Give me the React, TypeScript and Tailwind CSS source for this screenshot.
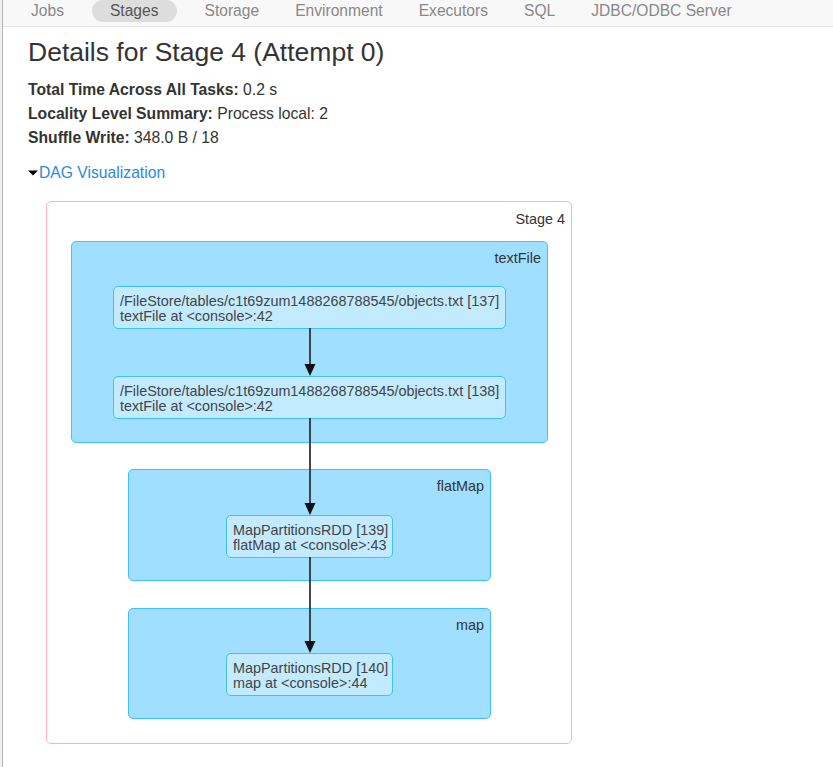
import React from 'react';

const tabs = ['Jobs', 'Stages', 'Storage', 'Environment', 'Executors', 'SQL', 'JDBC/ODBC Server'];

const stats = [
  { label: 'Total Time Across All Tasks:', value: '0.2 s' },
  { label: 'Locality Level Summary:', value: 'Process local: 2' },
  { label: 'Shuffle Write:', value: '348.0 B / 18' },
];

// DAG layout, coordinates relative to the stage box
const clusters = [
  { name: 'textFile', left: 24, top: 39, width: 477, height: 202 },
  { name: 'flatMap', left: 81, top: 267, width: 363, height: 112 },
  { name: 'map', left: 81, top: 406, width: 363, height: 111 },
];

const nodes = [
  { left: 66, top: 84, width: 393, lines: ['/FileStore/tables/c1t69zum1488268788545/objects.txt [137]', 'textFile at <console>:42'] },
  { left: 66, top: 174, width: 393, lines: ['/FileStore/tables/c1t69zum1488268788545/objects.txt [138]', 'textFile at <console>:42'] },
  { left: 179, top: 313, width: 167, lines: ['MapPartitionsRDD [139]', 'flatMap at <console>:43'] },
  { left: 179, top: 451, width: 167, lines: ['MapPartitionsRDD [140]', 'map at <console>:44'] },
];

const edges = [
  { x: 263, y1: 126, y2: 174 },
  { x: 263, y1: 216, y2: 313 },
  { x: 263, y1: 355, y2: 451 },
];

const App = () => {
  return (
    <div className="min-h-screen bg-white flex text-[#333]" style={{ fontFamily: '"Liberation Sans", Arial, sans-serif' }}>
      {/* left window edge */}
      <div className="w-[3px] bg-[#f0f0f0] border-r border-[#b5b5b5] shrink-0" />

      <div className="flex-1 flex flex-col">
        {/* Nav */}
        <div className="h-[27px] bg-[#f8f8f8] border-b border-[#e3e3e3] flex items-start pl-[10px] text-[15.6px] leading-[22px] text-[#888]">
          {tabs.map((t) =>
            t === 'Stages' ? (
              <div key={t} className="mx-[10px] px-[18px] bg-[#dddddd] rounded-full text-[#555] h-[22px]">
                {t}
              </div>
            ) : (
              <div key={t} className="px-[18px]">
                {t}
              </div>
            )
          )}
        </div>

        <div className="pl-[25px] pt-[10px]">
          <h3 className="text-[26.5px] leading-[30px] text-[#333]">Details for Stage 4 (Attempt 0)</h3>

          <ul className="mt-[11px] text-[15.7px] leading-[24px]">
            {stats.map((s) => (
              <li key={s.label}>
                <strong className="font-bold">{s.label}</strong> {s.value}
              </li>
            ))}
          </ul>

          <div className="mt-[11px] flex items-center text-[15.7px] leading-[24px] text-[#2a8ad9]">
            <svg width="11" height="8" viewBox="0 0 11 8">
              <path d="M0 1.5 L10 1.5 L5 6.5 Z" fill="#000" />
            </svg>
            <span>DAG Visualization</span>
          </div>

          {/* DAG */}
          <div className="relative mt-[16px] ml-[18px] w-[526px] h-[543px] bg-white border border-[#ffb0c0] rounded-[5px] text-[14.4px] leading-[15px] text-[#333]">
            <div className="absolute right-[6px] top-[10px]">Stage 4</div>

            {clusters.map((c) => (
              <div
                key={c.name}
                className="absolute bg-[#a0dfff] border border-[#3ec0ff] rounded-[5px]"
                style={{ left: c.left, top: c.top, width: c.width, height: c.height }}
              >
                <div className="absolute right-[6px] top-[9px]">{c.name}</div>
              </div>
            ))}

            {nodes.map((n, i) => (
              <div
                key={i}
                className="absolute bg-[#c3ebff] border border-[#3ec0ff] rounded-[5px] h-[43px] pl-[6px] pt-[7px] whitespace-nowrap text-[#444]"
                style={{ left: n.left, top: n.top, width: n.width }}
              >
                {n.lines.map((l) => (
                  <div key={l}>{l}</div>
                ))}
              </div>
            ))}

            <svg className="absolute left-0 top-0" width="526" height="543">
              {edges.map((e, i) => (
                <g key={i}>
                  <line x1={e.x} y1={e.y1} x2={e.x} y2={e.y2 - 10} stroke="#333" strokeWidth="1.8" />
                  <path d={`M${e.x - 5.5} ${e.y2 - 12} L${e.x + 5.5} ${e.y2 - 12} L${e.x} ${e.y2} Z`} fill="#111" />
                </g>
              ))}
            </svg>
          </div>
        </div>
      </div>
    </div>
  );
};

export default App;
